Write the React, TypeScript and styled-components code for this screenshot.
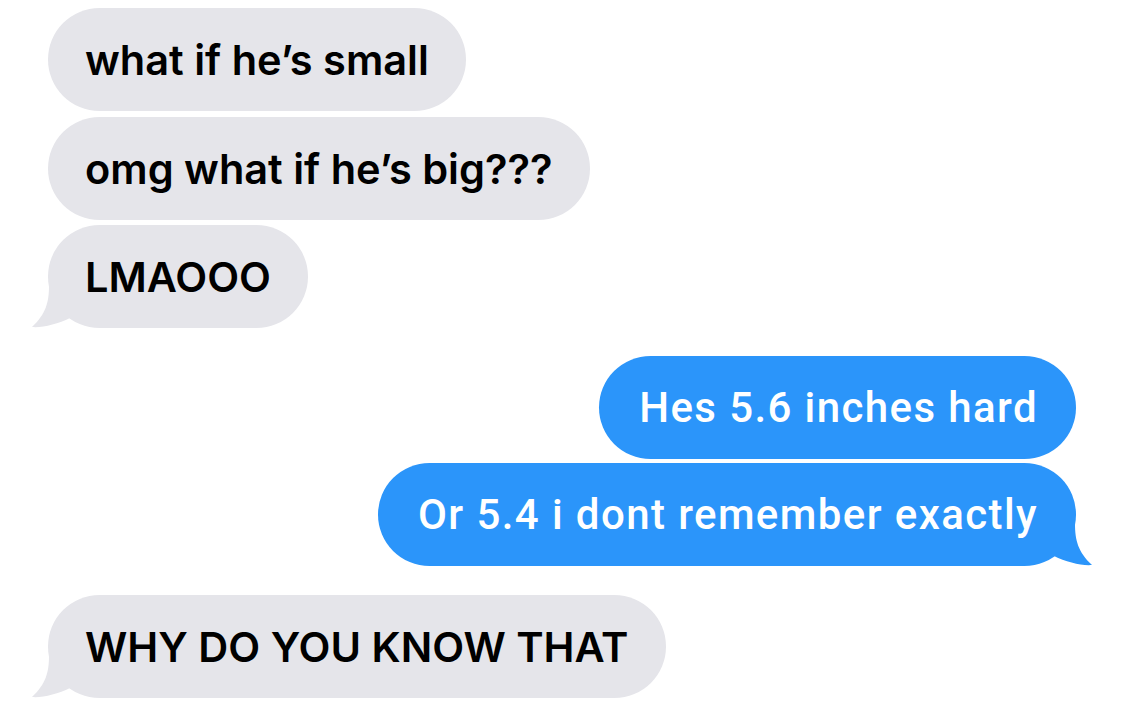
import styled, { createGlobalStyle } from "styled-components";

const GlobalStyle = createGlobalStyle`
  html, body {
    margin: 0;
    padding: 0;
    background: #ffffff;
  }
`;

const GRAY = "#e5e5ea";
const BLUE = "#2b95fa";

const Thread = styled.div`
  width: 1125px;
  height: 715px;
  box-sizing: border-box;
  padding: 8px 49px 0 48px;
  display: flex;
  flex-direction: column;
  overflow: hidden;
`;

const Row = styled.div<{ $mine?: boolean; $space: number }>`
  display: flex;
  justify-content: ${(p) => (p.$mine ? "flex-end" : "flex-start")};
  margin-top: ${(p) => p.$space}px;
`;

const Bubble = styled.div<{ $mine?: boolean }>`
  position: relative;
  box-sizing: border-box;
  height: 103px;
  padding: ${(p) => (p.$mine ? "0 38px 0 40px" : "0 37px 0 37px")};
  border-radius: 52px;
  display: flex;
  align-items: center;
  background: ${(p) => (p.$mine ? BLUE : GRAY)};
  color: ${(p) => (p.$mine ? "#ffffff" : "#000000")};
  font-family: ${(p) => (p.$mine ? "Roboto" : "Inter")}, "Liberation Sans", sans-serif;
  font-weight: ${(p) => (p.$mine ? 500 : 600)};
  font-size: ${(p) => (p.$mine ? "42px" : "41.5px")};
  letter-spacing: ${(p) => (p.$mine ? "1.4px" : "0")};
  white-space: nowrap;
`;

const Label = styled.span`
  position: relative;
`;

// tail hangs off the bottom corner, over the page
const Tail = styled.svg<{ $mine?: boolean }>`
  position: absolute;
  bottom: 0;
  width: 50px;
  height: 52px;
  ${(p) => (p.$mine ? "right: -16px; transform: scaleX(-1);" : "left: -16px;")}
`;

const BubbleTail = ({ mine }: { mine?: boolean }) => (
  <Tail $mine={mine} viewBox="0 0 50 52">
    <path
      d="M17 0 L17 10 C17 26 14 38 0 51 C10 52 26 48 38 42 L50 42 L50 0 Z"
      fill={mine ? BLUE : GRAY}
    />
  </Tail>
);

type Msg = { text: string; mine?: boolean; tail?: boolean; space: number };

const messages: Msg[] = [
  { text: "what if he\u2019s small", space: 0 },
  { text: "omg what if he\u2019s big???", space: 6 },
  { text: "LMAOOO", tail: true, space: 5 },
  { text: "Hes 5.6 inches hard", mine: true, space: 28 },
  { text: "Or 5.4 i dont remember exactly", mine: true, tail: true, space: 4 },
  { text: "WHY DO YOU KNOW THAT", tail: true, space: 29 },
];

const App = () => {
  return (
    <>
      <GlobalStyle />
      <Thread>
        {messages.map((m, i) => (
          <Row key={i} $mine={m.mine} $space={m.space}>
            <Bubble $mine={m.mine}>
              {m.tail && <BubbleTail mine={m.mine} />}
              <Label>{m.text}</Label>
            </Bubble>
          </Row>
        ))}
      </Thread>
    </>
  );
};

export default App;
